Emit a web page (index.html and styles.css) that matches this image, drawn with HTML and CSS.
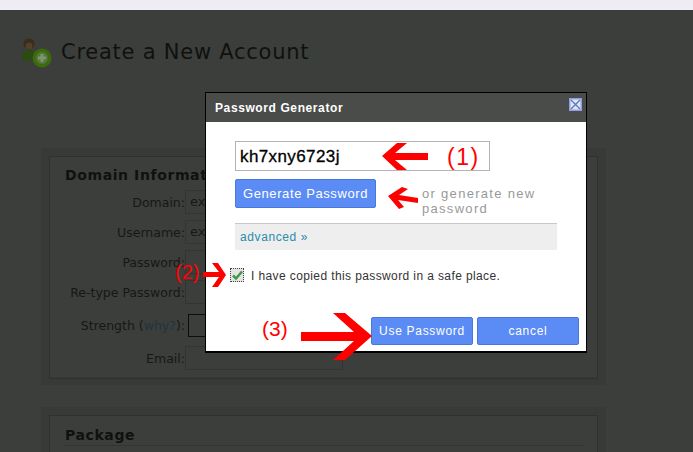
FILE: index.html
```html
<!DOCTYPE html>
<html lang="en">
<head>
    <meta charset="UTF-8">
    <meta name="viewport" content="width=device-width, initial-scale=1.0">
    <title>Create a New Account</title>
    <link rel="stylesheet" href="styles.css">
</head>
<body>
    <div class="top-strip"></div>
    <div class="page">
        <div class="page-title">
            <svg class="title-icon" width="34" height="34" viewBox="0 0 34 34">
                <circle cx="9" cy="9" r="5.5" fill="#3a2c16"/>
                <path d="M2 23c0-6 3-8 7-8s7 2 7 8l-4 3H3z" fill="#2c4a12"/>
                <circle cx="9" cy="11" r="3.5" fill="#52402a"/>
                <circle cx="22" cy="23" r="9.5" fill="#3f6a0c"/>
                <circle cx="22" cy="23" r="6" fill="#55783a"/>
                <path d="M20.500 19h3v2.500h2.500v3h-2.500v2.500h-3v-2.500H18v-3h2.500z" fill="#7d9672"/>
            </svg>
            <h1>Create a New Account</h1>
        </div>

        <div class="panel panel-domain">
            <div class="panel-inner">
                <h2>Domain Information</h2>
                <div class="form-grid">
                    <label>Domain:</label><div class="field">ex</div>
                    <label>Username:</label><div class="field">ex</div>
                    <label>Password:</label><div class="field"></div>
                    <label>Re-type Password:</label><div class="field"></div>
                    <label>Strength (<a href="#">why?</a>):</label><div class="strength"></div>
                    <label>Email:</label><div class="field"></div>
                </div>
            </div>
        </div>

        <div class="panel panel-package">
            <div class="panel-inner">
                <h2 class="ruled">Package</h2>
            </div>
        </div>
    </div>

    <div class="dialog">
        <div class="dialog-title">
            <span>Password Generator</span>
            <svg class="close-icon" width="13" height="13" viewBox="0 0 13 13">
                <rect width="13" height="13" fill="#8f9fe0"/>
                <rect x="1.500" y="1.500" width="10" height="10" fill="#dfe6f7"/>
                <path d="M2 2l9 9M11 2l-9 9" stroke="#5a76b8" stroke-width="1.300"/>
            </svg>
        </div>
        <div class="dialog-body">
            <div class="password-box">kh7xny6723j</div>
            <div class="generate-row">
                <button class="btn btn-generate">Generate Password</button>
                <div class="hint">or generate new password</div>
            </div>
            <div class="advanced"><a href="#">advanced »</a></div>
            <div class="confirm-row">
                <span class="check">
                    <svg width="11" height="11" viewBox="0 0 11 11">
                        <path d="M1 5.500l3 3 6-7" fill="none" stroke="#3c9a4a" stroke-width="2.500"/>
                    </svg>
                </span>
                <span class="confirm-text">I have copied this password in a safe place.</span>
            </div>
            <div class="dialog-actions">
                <button class="btn btn-action">Use Password</button>
                <button class="btn btn-action">cancel</button>
            </div>
        </div>
    </div>

    <!-- red annotations drawn on top of the screenshot -->
    <svg class="arrows" width="693" height="452" viewBox="0 0 693 452">
        <g fill="#f00">
            <polygon points="382,156 397,143 407,143 395,153 428,153 428,160 395,160 407,170 397,170"/>
            <polygon points="388,196 402,187 408,189 399,195 418,198 418,203 398,200 404,207 399,209"/>
            <polygon points="226,275 218,263 212,263 219,272 203,272 203,277 219,277 212,287 218,287"/>
            <polygon points="372,336 345,313 333,313 354,332 301,332 301,341 354,341 333,360 345,360"/>
        </g>
    </svg>
    <span class="note note-1">(1)</span>
    <span class="note note-2">(2)</span>
    <span class="note note-3">(3)</span>
</body>
</html>
```

FILE: styles.css
```css
html, body {
    margin: 0;
    padding: 0;
}

body {
    position: relative;
    width: 693px;
    height: 452px;
    overflow: hidden;
    background: #3c3e3b;
    font-family: 'Liberation Sans', Arial, sans-serif;
}

.top-strip {
    height: 10px;
    background: #efedf3;
}

.page {
    padding: 0 87px 0 41px;
}

.page-title {
    display: flex;
    align-items: center;
    height: 84px;
    margin-left: -21px;
    margin-bottom: 54px;
}

.title-icon {
    flex: none;
    margin-right: 7px;
}

h1 {
    margin: 0;
    font-family: 'DejaVu Sans', sans-serif;
    font-size: 21px;
    font-weight: 400;
    letter-spacing: 0.75px;
    color: #0f1110;
}

.panel {
    width: 565px;
    box-sizing: border-box;
    border: 8px solid #383a37;
    margin-right: -87px;
}

.panel-inner {
    border: 1px solid #2f312e;
    padding: 10px 14px 7px 15px;
}

.panel-domain {
    height: 237px;
    margin-bottom: 22px;
}

.panel-domain .panel-inner {
    height: 204px;
}

h2 {
    margin: 0;
    font-family: 'DejaVu Sans', sans-serif;
    font-size: 14px;
    font-weight: 700;
    letter-spacing: 0.6px;
    line-height: 16px;
    color: #0f1110;
}

h2.ruled {
    padding: 1px 0 2px;
    border-bottom: 1px solid #333532;
}

.form-grid {
    display: grid;
    grid-template-columns: 120px 158px;
    grid-template-rows: 24px 24px 24px 24px 30px 24px;
    row-gap: 6px;
    margin-top: 7px;
    align-items: center;
}

.form-grid label {
    justify-self: end;
    font-family: 'DejaVu Sans', sans-serif;
    font-size: 12.5px;
    line-height: 15px;
    white-space: nowrap;
    color: #161816;
}

.form-grid a {
    color: #22333f;
    text-decoration: none;
}

.field {
    height: 22px;
    border: 1px solid #333532;
    padding-left: 4px;
    font-family: 'DejaVu Sans', sans-serif;
    font-size: 13px;
    line-height: 22px;
    color: #161816;
}

.strength {
    width: 40px;
    height: 21px;
    margin-left: 3px;
    border: 1px solid #0c0d0c;
}

.dialog {
    position: absolute;
    left: 205px;
    top: 92px;
    width: 382px;
    height: 261px;
    box-sizing: border-box;
    border: 1px solid #000;
    border-bottom-width: 2px;
    background: #fff;
}

.dialog-title {
    display: flex;
    align-items: center;
    justify-content: space-between;
    height: 29px;
    padding: 0 4px 0 9px;
    background: #4a4c49;
    font-size: 12px;
    font-weight: 700;
    letter-spacing: 0.6px;
    color: #fff;
}

.close-icon {
    margin-bottom: 6px;
}

.dialog-body {
    padding: 19px 7px 0 24px;
}

.password-box {
    width: 255px;
    height: 30px;
    box-sizing: border-box;
    margin-left: 5px;
    padding-left: 4px;
    border: 1px solid #b4b4b4;
    font-size: 17px;
    line-height: 29px;
    letter-spacing: 0.4px;
    -webkit-text-stroke: 0.3px #000;
    color: #000;
}

.generate-row {
    display: flex;
    height: 29px;
    margin: 8px 0 15px 5px;
}

.btn {
    padding: 0;
    border: 1px solid #4a78d8;
    border-radius: 2px;
    background: #5b8cf5;
    font-family: 'Liberation Sans', Arial, sans-serif;
    font-size: 13px;
    letter-spacing: 0.6px;
    color: #fff;
}

.btn-generate {
    flex: none;
    width: 141px;
    height: 29px;
}

.hint {
    width: 135px;
    margin: 7px 0 0 46px;
    font-size: 13px;
    line-height: 15px;
    letter-spacing: 1.3px;
    color: #999;
}

.advanced {
    width: 322px;
    height: 27px;
    box-sizing: border-box;
    margin-left: 5px;
    padding-left: 5px;
    border-top: 1px solid #c8c8c8;
    background: #eee;
    font-size: 12px;
    line-height: 27px;
    letter-spacing: 0.6px;
}

.advanced a {
    color: #2a8ca8;
    text-decoration: none;
}

.confirm-row {
    display: flex;
    align-items: flex-start;
    height: 16px;
    margin-top: 18px;
    font-size: 12px;
    letter-spacing: 0.39px;
    color: #333;
}

.confirm-text {
    padding-top: 1px;
}

.check {
    display: flex;
    align-items: center;
    justify-content: center;
    box-sizing: border-box;
    width: 14px;
    height: 14px;
    margin-right: 7px;
    border: 1px dotted #444;
    background: #e4e4e0;
}

.dialog-actions {
    display: flex;
    justify-content: flex-end;
    gap: 4px;
    margin-top: 33px;
}

.btn-action {
    width: 102px;
    height: 28px;
    font-size: 12px;
    letter-spacing: 0.7px;
}

.arrows {
    position: absolute;
    left: 0;
    top: 0;
}

.note {
    position: absolute;
    font-family: 'Liberation Sans', Arial, sans-serif;
    line-height: 1;
    color: #f00;
}

.note-1 {
    left: 447px;
    top: 146px;
    font-size: 23px;
    letter-spacing: 1.5px;
}

.note-2 {
    left: 175px;
    top: 262px;
    font-size: 20px;
}

.note-3 {
    left: 262px;
    top: 318px;
    font-size: 21px;
}
```
